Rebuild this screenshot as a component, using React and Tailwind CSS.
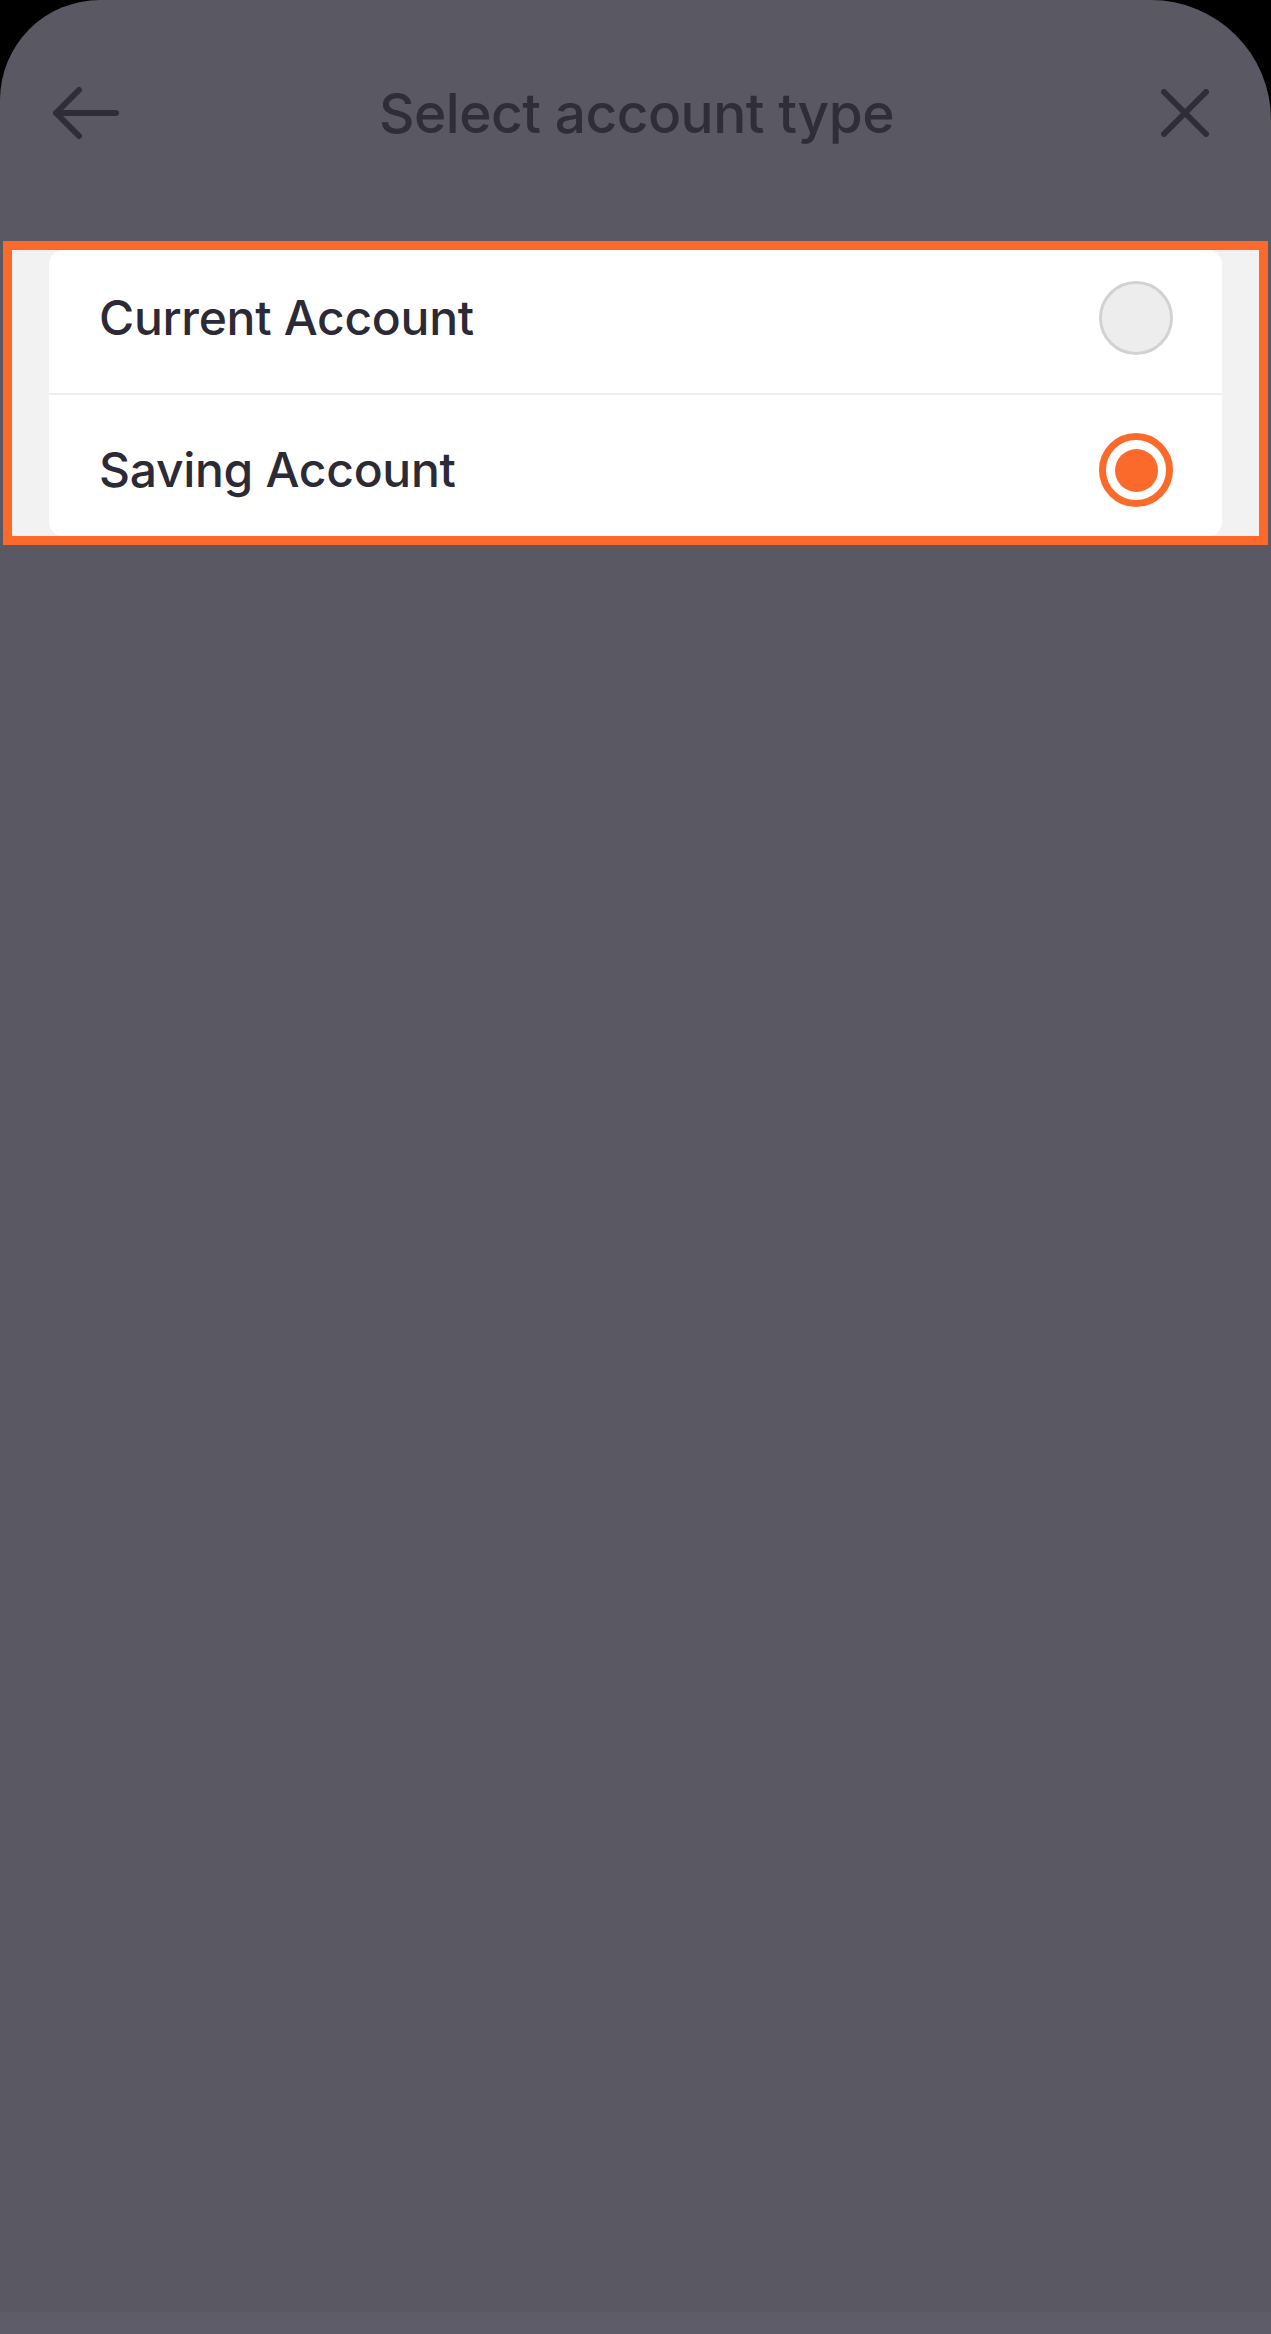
import { useState } from "react";

const options = [
  { id: "current", label: "Current Account", pad: "pb-[8px]" },
  { id: "saving", label: "Saving Account", pad: "pt-[9px] border-t-2 border-[#eeeef0]" },
];

function Radio({ checked }) {
  if (checked) {
    return (
      <div className="flex h-[74px] w-[74px] items-center justify-center rounded-full border-[7px] border-[#fb6a2b] bg-white">
        <div className="h-[43px] w-[43px] rounded-full bg-[#fb6a2b]" />
      </div>
    );
  }
  return (
    <div className="h-[74px] w-[74px] rounded-full border-[3px] border-[#d2d2d4] bg-[#ededee]" />
  );
}

export default function App() {
  const [selected, setSelected] = useState("saving");

  return (
    <div className="h-[2334px] w-[1271px] bg-black" style={{ fontFamily: "Inter, 'Noto Sans', sans-serif" }}>
      <div className="flex h-full flex-col rounded-tl-[100px] rounded-tr-[120px] bg-[#5a5963]">
        {/* header */}
        <div className="mt-[76px] flex h-[74px] items-center justify-between pl-[52px] pr-[62px]">
          <svg width="68" height="54" viewBox="0 0 68 54" fill="none" stroke="#2e2d39" strokeWidth="6" strokeLinecap="round" strokeLinejoin="round">
            <path d="M64 27H4M27 4 4 27l23 23" />
          </svg>
          <h1 className="mr-[8px] text-[55px] font-medium tracking-[-0.5px] text-[#2e2d39]">Select account type</h1>
          <svg width="48" height="48" viewBox="0 0 48 48" fill="none" stroke="#2e2d39" strokeWidth="6" strokeLinecap="round">
            <path d="M3 3l42 42M45 3 3 45" />
          </svg>
        </div>

        {/* options */}
        <div className="mx-[3px] mt-[91px] border-[9px] border-[#fb6a2b] bg-[#f2f2f3] px-[37px]">
          <div className="rounded-[14px] bg-white">
            {options.map((opt) => (
              <button
                key={opt.id}
                type="button"
                onClick={() => setSelected(opt.id)}
                className={`flex h-[143px] w-full items-center justify-between pl-[50px] pr-[49px] ${opt.pad}`}
              >
                <span className="text-[48px] font-medium tracking-[-0.3px] text-[#2b2a36]">{opt.label}</span>
                <Radio checked={selected === opt.id} />
              </button>
            ))}
          </div>
        </div>

        <div className="flex-1" />
        <div className="h-[22px] bg-[#5d5c68]" />
      </div>
    </div>
  );
}
